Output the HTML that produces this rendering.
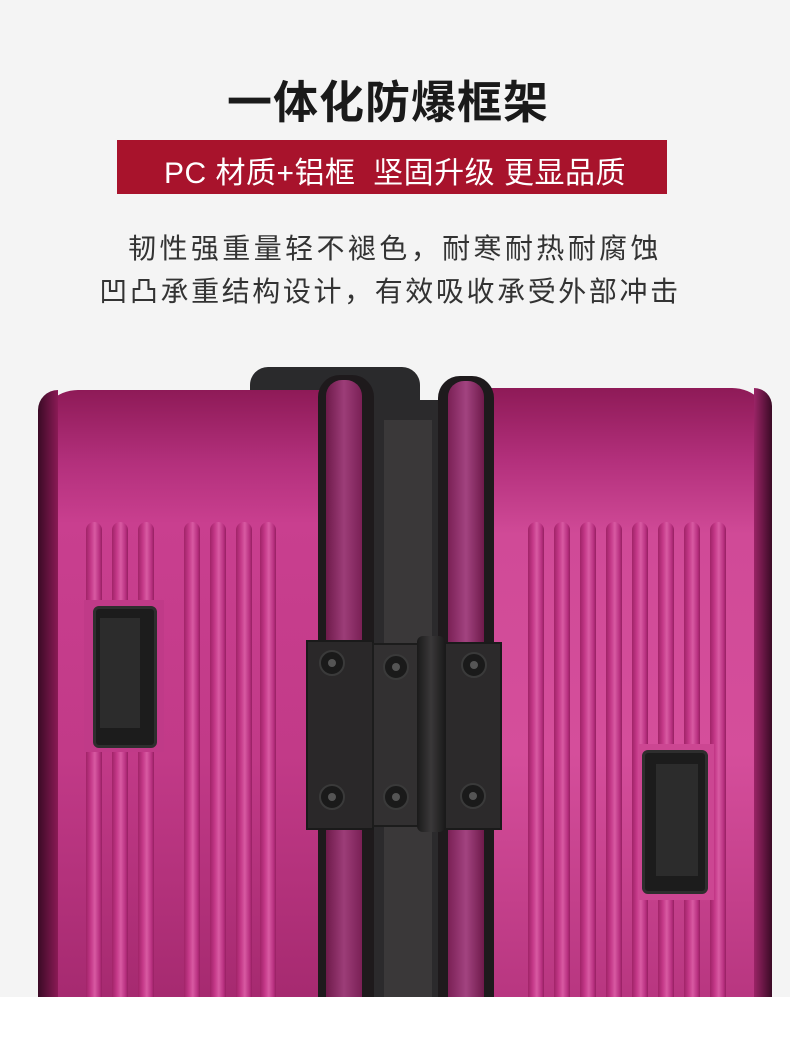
<!DOCTYPE html>
<html><head><meta charset="utf-8"><style>
*{margin:0;padding:0;box-sizing:border-box}
body{width:790px;height:1049px;background:#f4f4f4;position:relative;overflow:hidden;font-family:"Liberation Sans","Noto Sans CJK SC",sans-serif}
.a{position:absolute}
.t{left:0;width:790px;text-align:center}
.rib{position:absolute;width:16px;border-radius:8px 8px 0 0;background:linear-gradient(90deg,#a02468 0,#c43888 30%,#d85aa2 55%,#b83080 85%,#962062 100%)}
.scr{position:absolute;width:26px;height:26px;border-radius:50%;background:#1a1a1a;border:2px solid #3a3a3a}
.scr:after{content:"";position:absolute;left:7px;top:7px;width:8px;height:8px;border-radius:50%;background:#555}
</style></head><body>
<div class="a t" style="top:66px;left:-7px;font-size:45px;font-weight:bold;color:#1a1a1a;letter-spacing:1px">一体化防爆框架</div>
<div class="a" style="left:117px;top:140px;width:550px;height:54px;background:#a8132c"></div>
<div class="a t" style="top:148px;font-size:30px;color:#fff;letter-spacing:0.5px">PC 材质+铝框&nbsp; 坚固升级 更显品质</div>
<div class="a t" style="top:227px;font-size:28px;color:#333;letter-spacing:3.4px">韧性强重量轻不褪色，耐寒耐热耐腐蚀</div>
<div class="a t" style="top:270px;left:-5px;font-size:28px;color:#333;letter-spacing:2.6px">凹凸承重结构设计，有效吸收承受外部冲击</div>

<div class="a" style="left:0;top:997px;width:790px;height:52px;background:#fff"></div>
<div class="a" style="left:250px;top:367px;width:170px;height:40px;border-radius:18px 18px 0 0;background:#2a2a2c"></div>
<div class="a" style="left:38px;top:390px;width:290px;height:607px;border-radius:40px 0 0 0;background:linear-gradient(180deg,#8e1a57 0,#b3307c 12%,#c93f8f 22%,#c23a88 60%,#a62a70 100%)"></div>
<div class="a" style="left:38px;top:390px;width:20px;height:607px;border-radius:40px 0 0 0;background:linear-gradient(90deg,#3a0a25,#8a1a55)"></div>
<div class="a" style="left:486px;top:388px;width:286px;height:609px;border-radius:0 40px 0 0;background:linear-gradient(180deg,#8e1a57 0,#b3307c 12%,#d04a97 24%,#d54e9b 60%,#b83680 100%)"></div>
<div class="a" style="left:754px;top:388px;width:18px;height:609px;border-radius:0 40px 0 0;background:linear-gradient(90deg,#9a2466,#3a0a25)"></div>
<div class="rib" style="left:86px;top:522px;height:475px"></div>
<div class="rib" style="left:112px;top:522px;height:475px"></div>
<div class="rib" style="left:138px;top:522px;height:475px"></div>
<div class="rib" style="left:184px;top:522px;height:475px"></div>
<div class="rib" style="left:210px;top:522px;height:475px"></div>
<div class="rib" style="left:236px;top:522px;height:475px"></div>
<div class="rib" style="left:260px;top:522px;height:475px"></div>
<div class="a" style="left:84px;top:600px;width:80px;height:152px;background:#c03a88"></div>
<div class="rib" style="left:528px;top:522px;height:475px"></div>
<div class="rib" style="left:554px;top:522px;height:475px"></div>
<div class="rib" style="left:580px;top:522px;height:475px"></div>
<div class="rib" style="left:606px;top:522px;height:475px"></div>
<div class="rib" style="left:632px;top:522px;height:475px"></div>
<div class="rib" style="left:658px;top:522px;height:475px"></div>
<div class="rib" style="left:684px;top:522px;height:475px"></div>
<div class="rib" style="left:710px;top:522px;height:475px"></div>
<div class="a" style="left:638px;top:744px;width:76px;height:156px;background:#cc4692"></div>
<div class="a" style="left:93px;top:606px;width:64px;height:142px;border-radius:6px;background:#1c1c1c;border:3px solid #2e2e2e"></div>
<div class="a" style="left:100px;top:618px;width:40px;height:110px;background:#2c2c2c"></div>
<div class="a" style="left:642px;top:750px;width:66px;height:144px;border-radius:6px;background:#1c1c1c;border:3px solid #2e2e2e"></div>
<div class="a" style="left:656px;top:764px;width:42px;height:112px;background:#2c2c2c"></div>
<div class="a" style="left:372px;top:400px;width:70px;height:597px;background:#2b2a2c"></div>
<div class="a" style="left:384px;top:420px;width:48px;height:577px;background:#3a3839"></div>
<div class="a" style="left:318px;top:375px;width:56px;height:622px;border-radius:22px 22px 0 0;background:#1e1a1c"></div>
<div class="a" style="left:326px;top:380px;width:36px;height:617px;border-radius:16px 16px 0 0;background:linear-gradient(90deg,#6e1a4a,#9c3d78 50%,#7a2055)"></div>
<div class="a" style="left:438px;top:376px;width:56px;height:621px;border-radius:22px 22px 0 0;background:#1e1a1c"></div>
<div class="a" style="left:448px;top:381px;width:36px;height:616px;border-radius:16px 16px 0 0;background:linear-gradient(90deg,#7a2055,#a24380 50%,#6e1a4a)"></div>
<div class="a" style="left:306px;top:640px;width:68px;height:190px;background:#2a2829;border:2px solid #1a1a1a"></div>
<div class="a" style="left:372px;top:643px;width:48px;height:184px;background:#323031;border:2px solid #1c1c1c"></div>
<div class="a" style="left:444px;top:642px;width:58px;height:188px;background:#2c2a2b;border:2px solid #1a1a1a"></div>
<div class="a" style="left:417px;top:636px;width:28px;height:196px;border-radius:6px;background:linear-gradient(90deg,#1a1a1a,#3a3839 50%,#1a1a1a)"></div>
<div class="scr" style="left:319px;top:650px"></div>
<div class="scr" style="left:383px;top:654px"></div>
<div class="scr" style="left:461px;top:652px"></div>
<div class="scr" style="left:319px;top:784px"></div>
<div class="scr" style="left:383px;top:784px"></div>
<div class="scr" style="left:460px;top:783px"></div>
</body></html>
